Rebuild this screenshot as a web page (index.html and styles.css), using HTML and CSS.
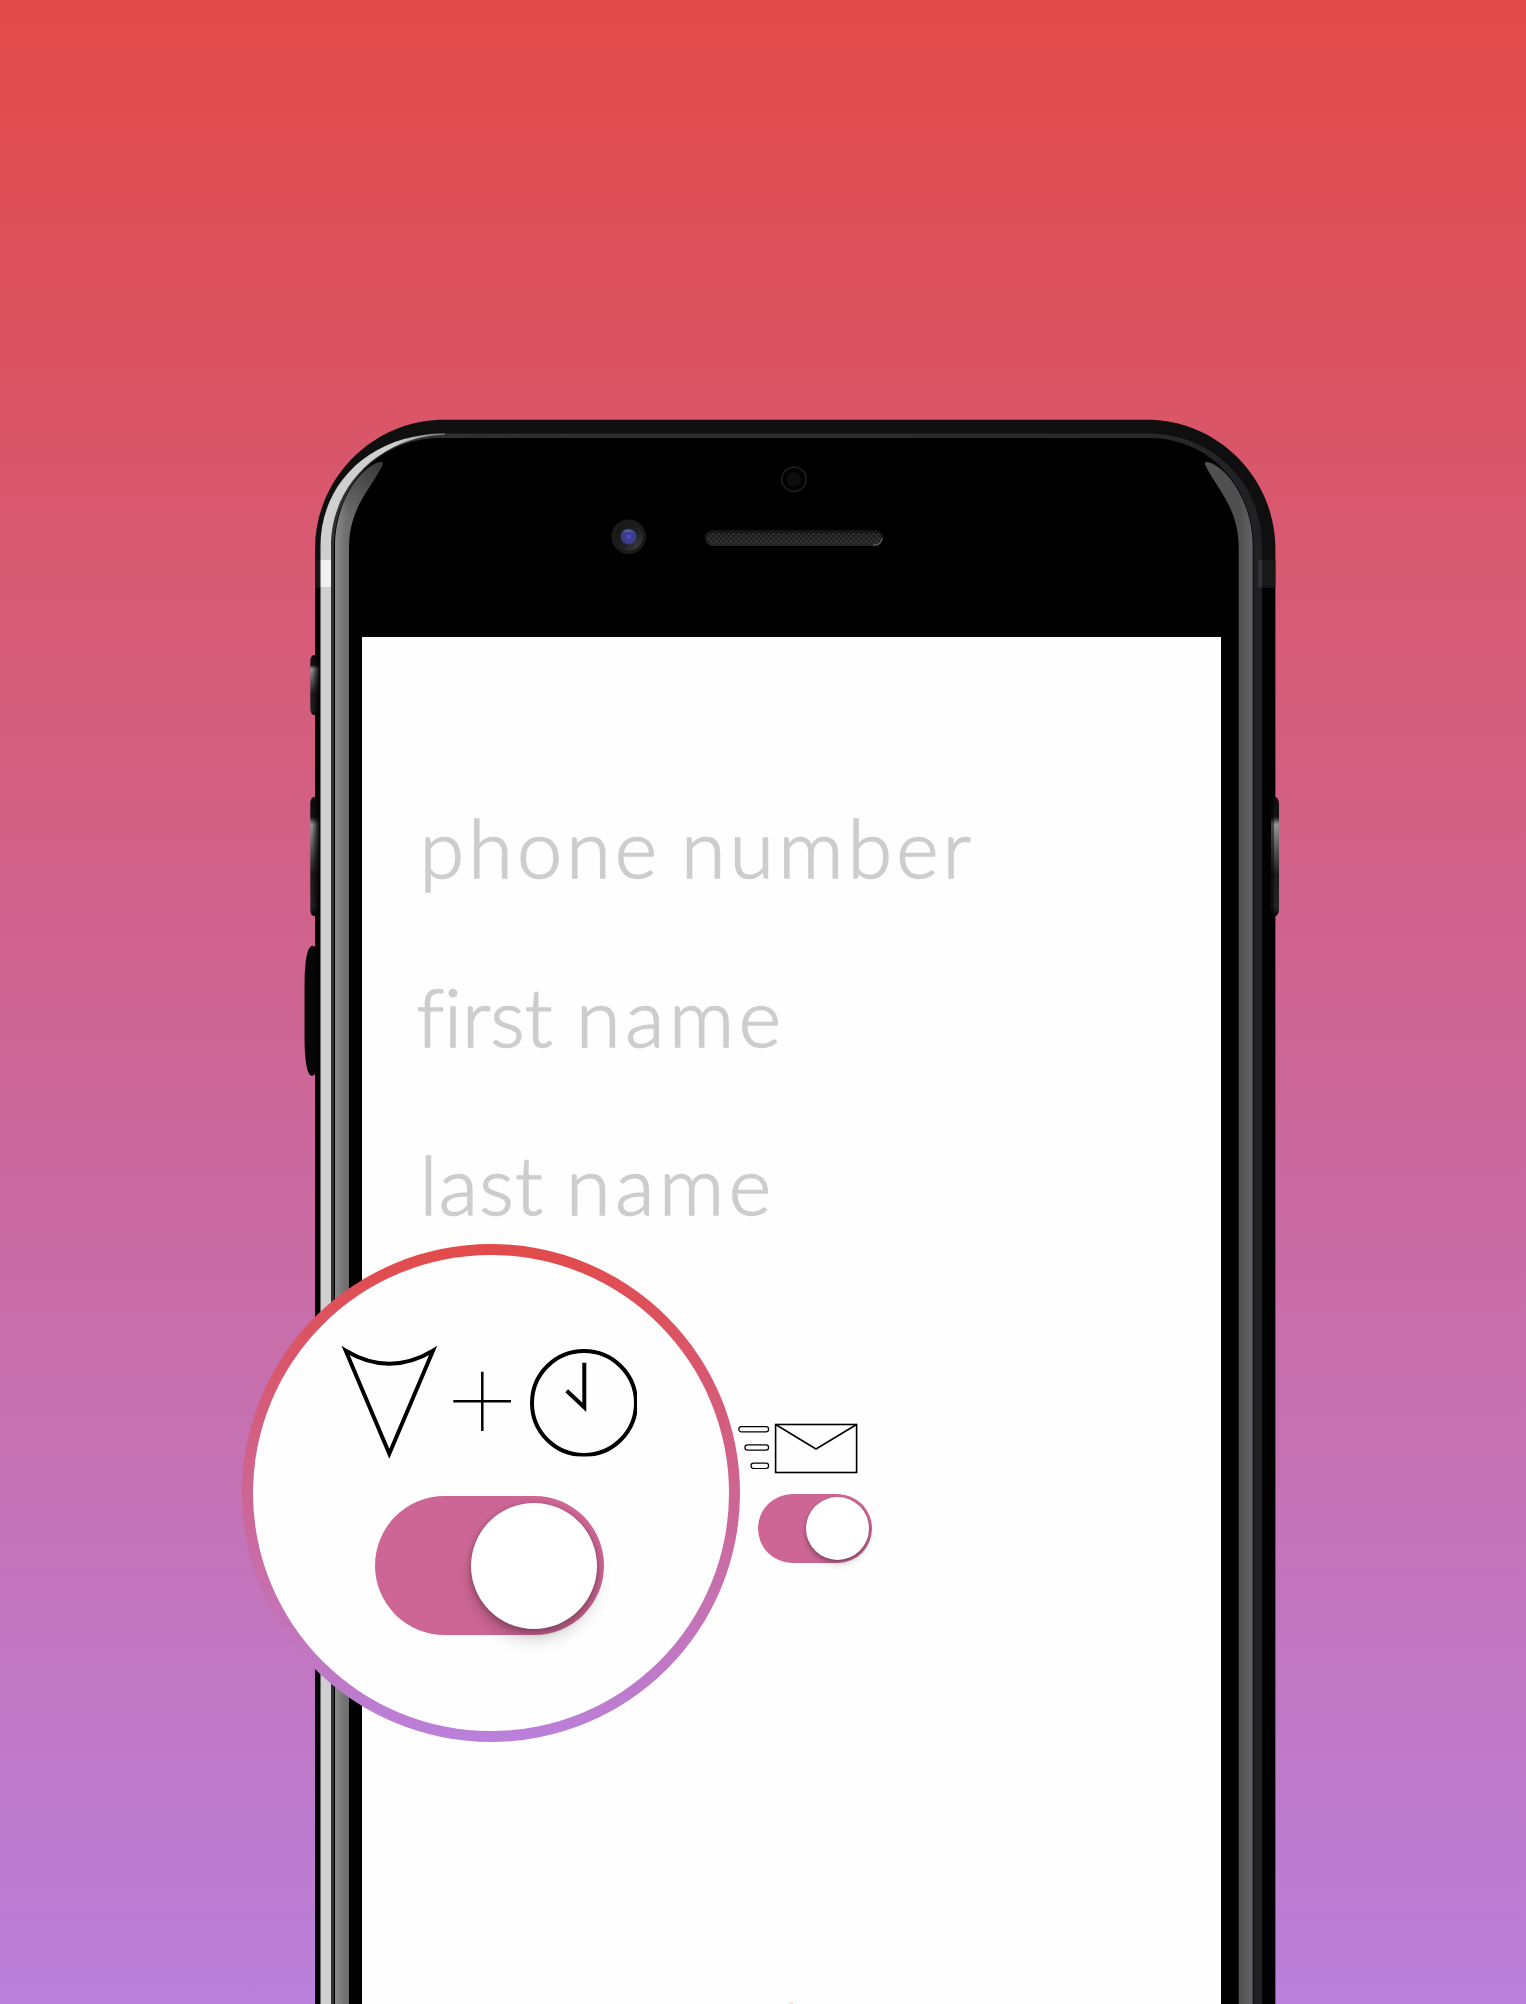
FILE: index.html
```html
<!DOCTYPE html>
<html lang="en">
<head>
<meta charset="utf-8">
<title>Sign up</title>
<link rel="stylesheet" href="styles.css">
</head>
<body>
<main class="stage">
  <svg class="device" viewBox="0 0 1526 2004" aria-hidden="true">
    <defs>
      <linearGradient id="glossLeft" x1="335" x2="349" y1="0" y2="0" gradientUnits="userSpaceOnUse">
        <stop offset="0" stop-color="#8b8b8b"/><stop offset=".6" stop-color="#757575"/><stop offset="1" stop-color="#6c6c6c"/>
      </linearGradient>
      <linearGradient id="tipLeft" x1="345" y1="515" x2="384" y2="462" gradientUnits="userSpaceOnUse">
        <stop offset="0" stop-color="#000" stop-opacity="0"/><stop offset="1" stop-color="#000" stop-opacity=".5"/>
      </linearGradient>
      <linearGradient id="glossRight" x1="1239" x2="1253" y1="0" y2="0" gradientUnits="userSpaceOnUse">
        <stop offset="0" stop-color="#505050"/><stop offset="1" stop-color="#636363"/>
      </linearGradient>
      <linearGradient id="key" x1="0" x2="0" y1="0" y2="1">
        <stop offset="0" stop-color="#0c0c0c"/><stop offset=".17" stop-color="#151515"/><stop offset=".23" stop-color="#959595"/>
        <stop offset=".38" stop-color="#666"/><stop offset=".65" stop-color="#1c1c1c"/><stop offset=".93" stop-color="#242424"/><stop offset="1" stop-color="#050505"/>
      </linearGradient>
      <linearGradient id="keyShade" x1="0" x2="1" y1="0" y2="0">
        <stop offset=".2" stop-color="#000" stop-opacity="0"/><stop offset="1" stop-color="#000" stop-opacity=".85"/>
      </linearGradient>
      <linearGradient id="rim" x1="430" x2="1262" y1="0" y2="0" gradientUnits="userSpaceOnUse">
        <stop offset="0" stop-color="#303033"/><stop offset=".9" stop-color="#28282b"/><stop offset="1" stop-color="#202023"/>
      </linearGradient>
      <linearGradient id="shine" x1="395" x2="445" y1="0" y2="0" gradientUnits="userSpaceOnUse">
        <stop offset="0" stop-color="#cfcfcf"/><stop offset="1" stop-color="#77777a"/>
      </linearGradient>
      <radialGradient id="lens" cx=".5" cy=".5" r=".5">
        <stop offset="0" stop-color="#6257d0"/><stop offset=".3" stop-color="#43399f"/><stop offset="1" stop-color="#363f78"/>
      </radialGradient>
      <linearGradient id="lensRing" x1="0" y1="0" x2="1" y2="1">
        <stop offset="0" stop-color="#141414"/><stop offset=".6" stop-color="#202123"/><stop offset="1" stop-color="#484848"/>
      </linearGradient>
      <linearGradient id="grille" x1="0" x2="0" y1="0" y2="1">
        <stop offset="0" stop-color="#141414"/><stop offset="1" stop-color="#262626"/>
      </linearGradient>
      <pattern id="mesh" width="5" height="5" patternUnits="userSpaceOnUse">
        <path d="M0 0h2.500v2.500H0zM2.500 2.500H5V5H2.500z" fill="#464646" opacity=".5"/>
      </pattern>
    </defs>

    <path d="M315 2004V549C315 478 373 419.700 444 419.700H1147C1218 419.700 1275.400 478 1275.400 549V2004Z" fill="#0f0f0f"/>
    <path d="M315.500 588V2004H321V588ZM1262 588V2004H1275V588Z" fill="#020202"/>
    <rect x="310.300" y="655" width="8" height="60" rx="3.800" ry="6" fill="url(#key)"/>
    <rect x="310.300" y="655" width="8" height="60" rx="3.800" ry="6" fill="url(#keyShade)"/>
    <rect x="310.300" y="797" width="8" height="119" rx="3.800" ry="6" fill="url(#key)"/>
    <rect x="310.300" y="797" width="8" height="119" rx="3.800" ry="6" fill="url(#keyShade)"/>
    <path d="M316 948Q309 940 305.700 961Q304.500 972 304.500 985V1038Q304.500 1052 306 1063Q309 1082 316 1073Z" fill="#060606"/>
    <rect x="1271" y="797" width="8" height="119" rx="3.800" ry="7" fill="url(#key)"/>
    <rect x="1271" y="797" width="3" height="119" rx="1.500" ry="6" fill="#000" opacity=".5"/>

    <path d="M331 2004V546C331 483 378 433.500 441 433.500H1149C1212 433.500 1262 483 1262 546V2004Z" fill="url(#rim)"/>
    <path d="M334 2004V548C334 486 379 438 441 438H1149C1209 438 1253.500 486 1253.500 548V2004Z" fill="#000"/>
    <path d="M320.500 2004V546C320.500 482 372 433.500 445 433.500V434.700C382 436 331 484 331 546V2004Z" fill="url(#shine)"/>
    <path d="M315 560h6v27h-6ZM1262 560h13.400v27H1262Z" fill="#181818"/>
    <rect x="320.500" y="560" width="10.500" height="27" fill="#f0f0f0"/>
    <path d="M1258.300 560h3.700v27h-3.700Z" fill="#343438"/>

    <path d="M335 2004V546C335 506 357 470 378 462.500Q384 460 382.500 465C370 490 349 508 349 548V2004Z" fill="url(#glossLeft)"/>
    <path d="M335 546C335 506 357 470 378 462.500Q384 460 382.500 465C370 490 349 508 349 548Z" fill="url(#tipLeft)"/>
    <path d="M1252.700 2004V546C1252.700 506 1230.700 470 1209.700 462.500Q1203.700 460 1205.200 465C1217.700 490 1238.700 508 1238.700 548V2004Z" fill="url(#glossRight)"/>

    <circle cx="794" cy="479.300" r="12.200" fill="#020202" stroke="#1c1c1c" stroke-width="1.800"/>
    <circle cx="794" cy="479.300" r="7.200" fill="#100d0d"/>
    <circle cx="628.700" cy="536.700" r="17.300" fill="#1b1b1b"/>
    <circle cx="628.700" cy="536.700" r="13.700" fill="url(#lensRing)"/>
    <circle cx="628.700" cy="536.700" r="8" fill="url(#lens)"/>
    <path d="M622 533Q627 526.500 634 532Q628 531 622 533Z" fill="#4b6fa3" opacity=".8"/>
    <rect x="705" y="530" width="178" height="16" rx="8" fill="url(#grille)"/>
    <rect x="707" y="533" width="174" height="10.500" rx="5" fill="url(#mesh)"/>
    <path d="M873 545.200Q881 545.500 882 538" fill="none" stroke="#606060" stroke-width="1.300"/>
  </svg>

  <section class="screen">
    <div class="fields">
      <p class="field phone-number">phone number</p>
      <p class="field first-name"><span class="lead">first</span> name</p>
      <p class="field last-name"><span class="lead">last</span> name</p>
    </div>
    <div class="mail-option">
      <svg class="mail-icon" viewBox="0 0 122 52" aria-hidden="true">
        <g fill="none" stroke="#000">
          <g stroke-width="1.200">
            <rect x="1.800" y="3.600" width="29.800" height="5.300" rx="2.650"/>
            <rect x="7.900" y="21.900" width="23.700" height="5.300" rx="2.650"/>
            <rect x="14" y="40.200" width="17.600" height="5.300" rx="2.650"/>
          </g>
          <rect x="38.600" y="1.500" width="81" height="48" stroke-width="1.600"/>
          <path d="M38.600 1.500L79 26L119.600 1.500" stroke-width="1.500"/>
        </g>
      </svg>
      <span class="toggle"><span class="knob"></span></span>
    </div>
    <span class="speck"></span>
  </section>

  <section class="magnifier">
    <svg class="timer-icon" viewBox="339 1344 300 118" aria-hidden="true">
      <g fill="none" stroke="#000" stroke-width="4">
        <path d="M345.700 1350.700Q389.300 1376.700 433 1350.700L389.300 1453.700Z" stroke-miterlimit="8"/>
        <path d="M453.300 1401.300H511M482.300 1371.700V1431" stroke-width="2.500"/>
        <circle cx="584" cy="1403" r="52"/>
        <path d="M584.300 1362.700V1407.300L566.700 1390.700"/>
      </g>
      <path d="M637 1380h3v46h-3ZM560 1456.500h48v3h-48Z" fill="#fff"/>
    </svg>
    <span class="toggle large"><span class="knob"></span></span>
  </section>
</main>
</body>
</html>
```
FILE: styles.css
```css
* { box-sizing: border-box; }

body {
  margin: 0;
  background: #fff;
}

.stage {
  position: relative;
  display: grid;
  width: 1526px;
  height: 2004px;
  overflow: hidden;
  background: linear-gradient(#e24a49, #ba80db);
}

.device {
  grid-area: 1 / 1;
  width: 1526px;
  height: 2004px;
}

.screen {
  grid-area: 1 / 1;
  display: flex;
  flex-direction: column;
  width: 858.500px;
  height: 1367px;
  margin: 637px 0 0 362px;
  padding-top: 126.300px;
  background: #fefefe;
}

.fields {
  height: 659.700px;
  padding-left: 57.500px;
}

.field {
  height: 168.300px;
  margin: 0;
  font: 300 81px/168.300px Lato, "Open Sans", sans-serif;
  font-variant-ligatures: none;
  color: #cdcdcd;
  -webkit-text-stroke: 1.600px #cdcdcd;
  white-space: nowrap;
}

.phone-number {
  letter-spacing: 4.100px;
  word-spacing: -6.400px;
}

.first-name {
  margin-left: -3px;
  letter-spacing: 4.600px;
  word-spacing: -3px;
}

.first-name .lead { letter-spacing: 0; }

.last-name {
  letter-spacing: 4.600px;
  word-spacing: -4.500px;
}

.last-name .lead { letter-spacing: 1.300px; }

.mail-option {
  display: flex;
  flex-direction: column;
  align-items: flex-end;
  width: 122px;
  margin-left: 375px;
  gap: 18.700px;
}

.mail-icon {
  display: block;
  width: 122px;
  height: 52px;
}

.mail-option .toggle { margin-right: -13px; }

.toggle {
  display: flex;
  justify-content: flex-end;
  width: 114.300px;
  height: 69.500px;
  padding: 3.200px;
  border-radius: 35px;
  background: #cd6694;
}

.knob {
  width: 63px;
  height: 63px;
  border-radius: 50%;
  background: #fff;
  box-shadow: 0 4px 6.500px rgba(0, 0, 0, .2), 0 1.500px 3px rgba(0, 0, 0, .25);
}

.toggle.large {
  width: 229.300px;
  height: 139.300px;
  padding: 6.700px;
  border-radius: 70px;
}

.large .knob {
  width: 126px;
  height: 126px;
  box-shadow: 0 11px 16px rgba(0, 0, 0, .16), 0 4px 7px rgba(0, 0, 0, .2), 0 0 4px rgba(0, 0, 0, .15);
}

.speck {
  width: 4px;
  height: 1px;
  margin: auto 0 0 427px;
  background: #f8d0d8;
}

.magnifier {
  position: absolute;
  left: 241.700px;
  top: 1244px;
  display: flex;
  flex-direction: column;
  align-items: center;
  width: 498.400px;
  height: 498.400px;
  padding-top: 89px;
  padding-right: 3px;
  gap: 34px;
  border: 11px solid transparent;
  border-radius: 50%;
  background: linear-gradient(#fefefe, #fefefe) padding-box, linear-gradient(#e24a49, #ba80db) border-box;
}

.timer-icon {
  display: block;
  width: 300px;
  height: 118px;
}
```
